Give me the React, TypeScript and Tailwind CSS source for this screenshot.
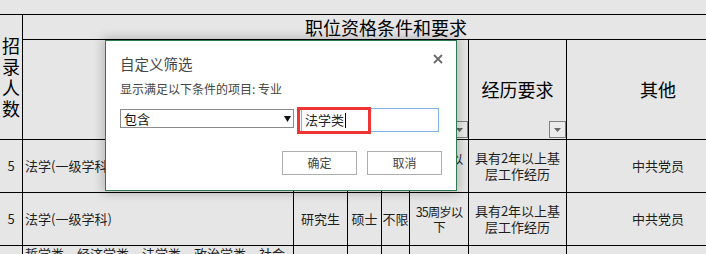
import React from "react";

const cell = "border-r border-b border-black flex items-center";

function FilterButton() {
  return (
    <span className="absolute bottom-[1px] right-0 flex h-[17px] w-[17px] items-center justify-center border border-[#7f7f7f] bg-[#ebebeb]">
      <svg width="7" height="4" viewBox="0 0 7 4">
        <path d="M0 0h7L3.5 4z" fill="#666" />
      </svg>
    </span>
  );
}

function DataRow() {
  return (
    <>
      <div className={`${cell} justify-center text-[13px]`}>5</div>
      <div className={`${cell} pl-[2px] text-[13px]`}>法学(一级学科)</div>
      <div className={`${cell} justify-center text-[13px]`}>研究生</div>
      <div className={`${cell} justify-center text-[13px]`}>硕士</div>
      <div className={`${cell} justify-center text-[13px]`}>不限</div>
      <div className={`${cell} justify-center overflow-hidden whitespace-nowrap text-center text-[12.5px] leading-[15px] tracking-[-1px]`}>
        <span>
          35周岁以
          <br />下
        </span>
      </div>
      <div className={`${cell} justify-center text-center text-[13px] leading-[16px]`}>
        <span>
          具有2年以上基
          <br />
          层工作经历
        </span>
      </div>
      <div className={`${cell} justify-center text-[13px]`}>中共党员</div>
    </>
  );
}

export default function App() {
  return (
    <div className="relative h-[254px] w-[706px] overflow-hidden bg-[#e6e6e6] font-['Noto_Sans_CJK_SC','Microsoft_YaHei',sans-serif] text-[#1e1e1e]">
      <div className="h-[15px] w-[750px] border-b border-black" />

      <div className="grid w-[750px] grid-cols-[23px_271px_54px_34px_28px_59px_98px_183px] grid-rows-[25px_100px_53px_53px_40px]">
        <div className={`${cell} row-span-2 justify-center text-center text-[18px] leading-[21px] text-black`}>
          招录人数
        </div>
        <div className={`${cell} col-span-7 justify-center text-[18px] leading-[24px] text-black`}>
          职位资格条件和要求
        </div>

        {/* sub-headers, mostly hidden behind the dialog */}
        <div className={`${cell} relative`}>
          <FilterButton />
        </div>
        <div className={`${cell} relative`}>
          <FilterButton />
        </div>
        <div className={`${cell} relative`}>
          <FilterButton />
        </div>
        <div className={`${cell} relative`}>
          <FilterButton />
        </div>
        <div className={`${cell} relative`}>
          <FilterButton />
        </div>
        <div className={`${cell} relative justify-center text-[18px] text-black`}>
          经历要求
          <FilterButton />
        </div>
        <div className={`${cell} justify-center text-[18px] text-black`}>其他</div>

        <DataRow />
        <DataRow />

        <div className="border-r border-black" />
        <div className="border-r border-black pl-[2px] text-[13px] leading-[16px]">
          哲学类、经济学类、法学类、政治学类、社会学类
        </div>
        <div className="border-r border-black" />
        <div className="border-r border-black" />
        <div className="border-r border-black" />
        <div className="border-r border-black" />
        <div className="border-r border-black" />
        <div className="border-r border-black" />
      </div>

      {/* custom filter dialog */}
      <div className="absolute left-[105px] top-[40px] flex h-[151px] w-[352px] flex-col border border-[#2f7b50] bg-white pl-[14px] pr-[13px] pt-[13px] shadow-[0_0_10px_2px_rgba(0,0,0,0.22)]">
        <div className="flex h-[20px] items-start justify-between">
          <span className="text-[14.5px] leading-[20px] text-[#444]">自定义筛选</span>
          <svg width="10" height="10" viewBox="0 0 10 10">
            <path d="M1 1l8 8M9 1l-8 8" stroke="#6a6a6a" strokeWidth="1.8" />
          </svg>
        </div>

        <div className="mt-[7px] text-[12px] leading-[16px] text-[#444]">
          显示满足以下条件的项目: 专业
        </div>

        <div className="mt-[11px] flex items-start">
          <div className="mt-[1px] flex h-[19px] w-[174px] items-center justify-between border border-[#8a8a8a] pl-[3px] pr-[2px] text-[13px] leading-[17px] text-[#111]">
            <span>包含</span>
            <svg width="7" height="6" viewBox="0 0 7 6">
              <path d="M0 0h7L3.5 6z" fill="#111" />
            </svg>
          </div>
          <div className="ml-[7px] flex h-[24px] w-[138px] items-center border border-[#7eb4ea] pl-[3px] text-[13px] text-[#222]">
            <span>法学类</span>
            <span className="ml-[1px] h-[15px] w-[1px] bg-black" />
          </div>
        </div>

        <div className="mr-[1px] mt-[19px] flex justify-end gap-[10px]">
          <button className="flex h-[24px] w-[75px] items-center justify-center border border-[#adadad] bg-white text-[12px] text-[#444]">
            确定
          </button>
          <button className="flex h-[24px] w-[75px] items-center justify-center border border-[#adadad] bg-white text-[12px] text-[#444]">
            取消
          </button>
        </div>

        <div className="absolute left-[191px] top-[66px] h-[27px] w-[74px] border-[3px] border-[#ee3535]" />
      </div>
    </div>
  );
}
